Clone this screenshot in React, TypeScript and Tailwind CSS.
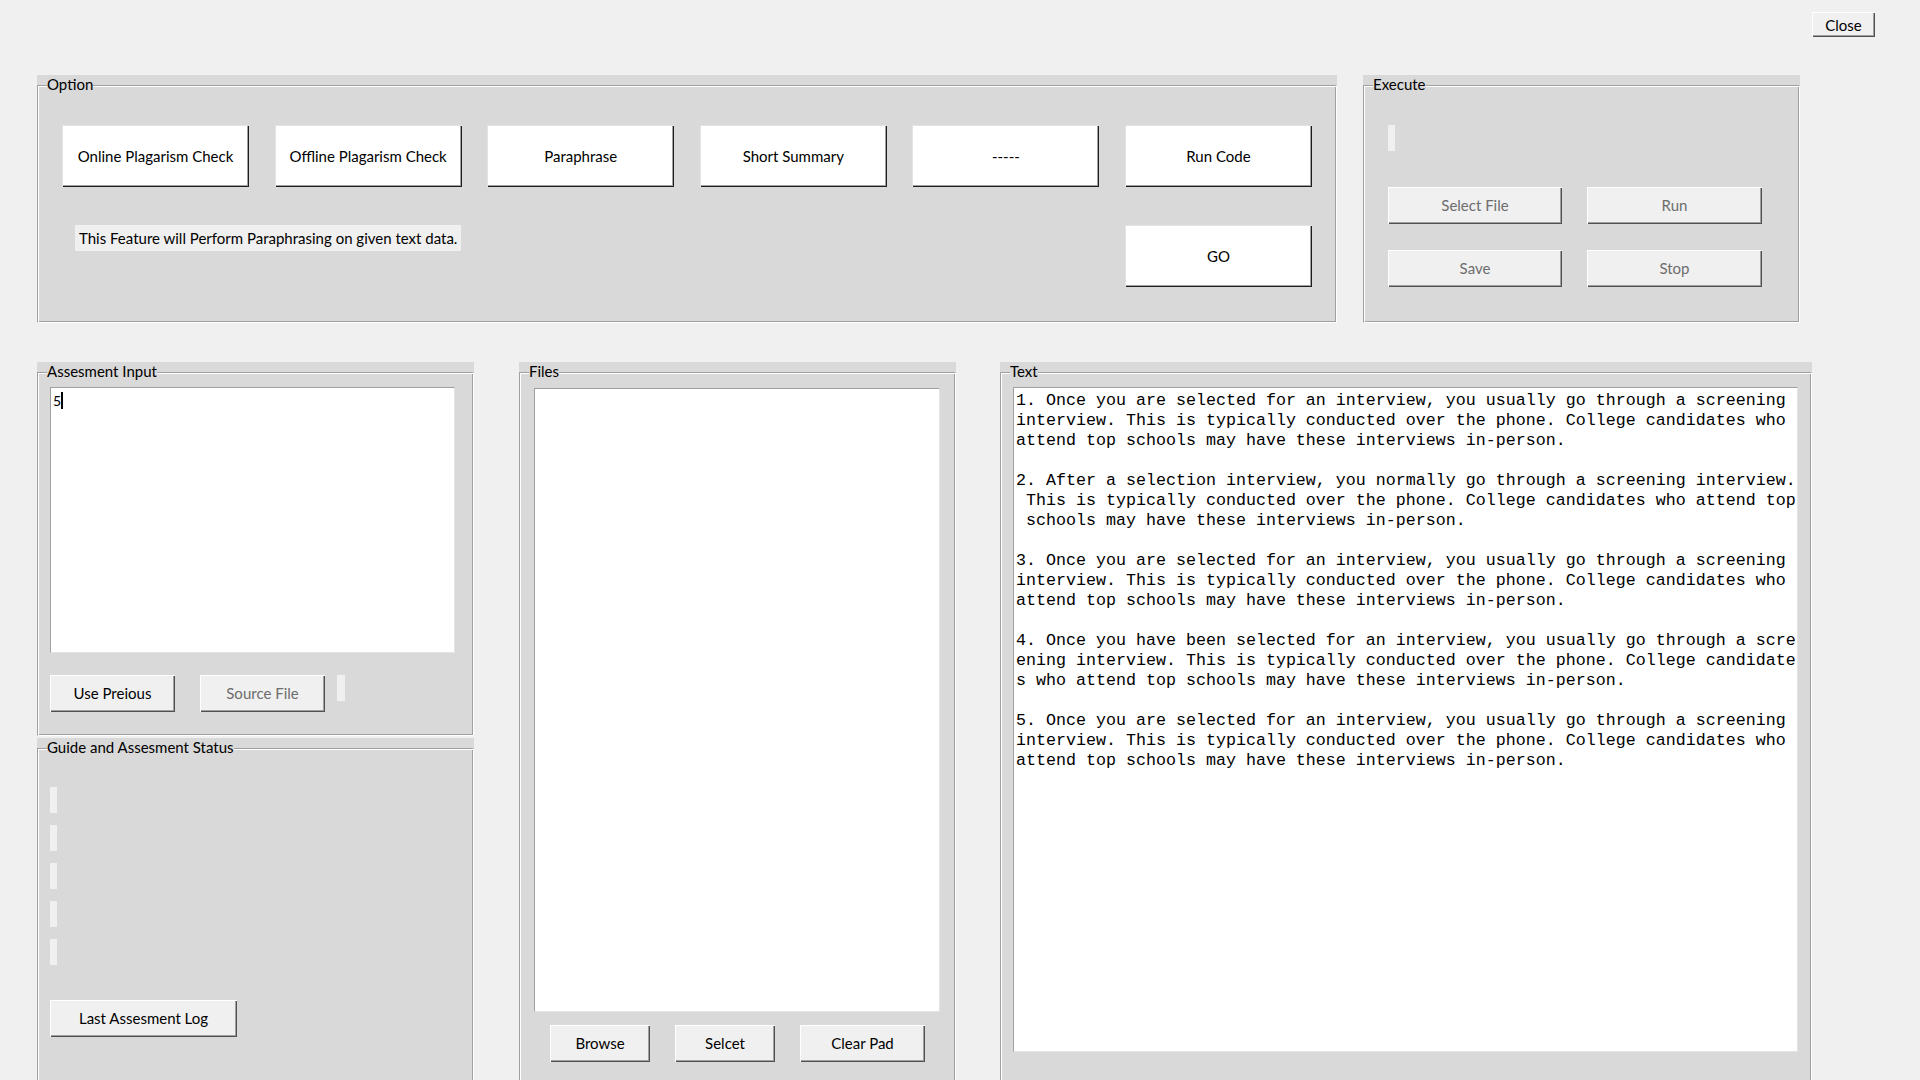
import React from "react";

const GROOVE =
  "border border-t-[#a0a0a0] border-l-[#a0a0a0] border-r-white border-b-white shadow-[inset_1px_1px_0_#ffffff,inset_-1px_-1px_0_#a0a0a0]";

const WHITE_BTN =
  "bg-white shadow-[inset_1px_1px_0_#e3e3e3,inset_-1px_-1px_0_#1e1e1e,inset_-2px_-2px_0_#a0a0a0] flex items-center justify-center text-black";

const GRAY_BTN =
  "bg-[#f0f0f0] shadow-[inset_1px_1px_0_#ffffff,inset_-1px_-1px_0_#505050,inset_-2px_-2px_0_#a0a0a0] flex items-center justify-center";

const SUNKEN =
  "bg-white border border-t-[#a0a0a0] border-l-[#a0a0a0] border-r-[#e3e3e3] border-b-[#e3e3e3]";

function Frame({
  label,
  className,
  innerClass,
  children,
}: {
  label: string;
  className?: string;
  innerClass?: string;
  children?: React.ReactNode;
}) {
  return (
    <div className={`relative bg-[#d9d9d9] pt-[10px] ${className ?? ""}`}>
      <span className="absolute left-[10px] top-0 bg-[#d9d9d9] leading-[19px] text-black">
        {label}
      </span>
      <div className={`h-full ${GROOVE} ${innerClass ?? ""}`}>{children}</div>
    </div>
  );
}

const para1 = [
  "1. Once you are selected for an interview, you usually go through a screening",
  "interview. This is typically conducted over the phone. College candidates who",
  "attend top schools may have these interviews in-person.",
  "",
  "2. After a selection interview, you normally go through a screening interview.",
  " This is typically conducted over the phone. College candidates who attend top",
  " schools may have these interviews in-person.",
  "",
  "3. Once you are selected for an interview, you usually go through a screening",
  "interview. This is typically conducted over the phone. College candidates who",
  "attend top schools may have these interviews in-person.",
  "",
  "4. Once you have been selected for an interview, you usually go through a scre",
  "ening interview. This is typically conducted over the phone. College candidate",
  "s who attend top schools may have these interviews in-person.",
  "",
  "5. Once you are selected for an interview, you usually go through a screening",
  "interview. This is typically conducted over the phone. College candidates who",
  "attend top schools may have these interviews in-person.",
];

export default function App() {
  const optionButtons = [
    "Online Plagarism Check",
    "Offline Plagarism Check",
    "Paraphrase",
    "Short Summary",
    "-----",
    "Run Code",
  ];
  return (
    <div className="w-[1920px] h-[1080px] overflow-hidden bg-[#f0f0f0] font-['Lato',sans-serif] text-[15px] text-black">
      {/* Close */}
      <div className="flex justify-end pt-[12px] pr-[45px]">
        <button type="button" className={`w-[63px] h-[25px] pt-[1px] ${GRAY_BTN} text-black`}>
          Close
        </button>
      </div>

      {/* Top row */}
      <div className="flex gap-[26px] pl-[37px] mt-[38px]">
        <Frame label="Option" className="w-[1300px] h-[248px]" innerClass="pt-[39px] pl-[24px] pr-[24px]">
          <div className="flex gap-[25.6px]">
            {optionButtons.map((b) => (
              <button key={b} type="button" className={`w-[187px] h-[62px] ${WHITE_BTN}`}>
                {b}
              </button>
            ))}
          </div>
          <div className="flex justify-between items-start mt-[38px]">
            <div className="ml-[13px] h-[26px] px-[4px] bg-[#f0f0f0] leading-[26px]">
              This Feature will Perform Paraphrasing on given text data.
            </div>
            <button type="button" className={`w-[187px] h-[62px] ${WHITE_BTN}`}>
              GO
            </button>
          </div>
        </Frame>

        <Frame label="Execute" className="w-[437px] h-[248px]" innerClass="pt-[39px] pl-[24px]">
          <div className="w-[7px] h-[26px] bg-[#f0f0f0]" />
          <div className="grid grid-cols-[174px_175px] gap-x-[25px] gap-y-[26px] mt-[36px]">
            {["Select File", "Run", "Save", "Stop"].map((b) => (
              <button key={b} type="button" className={`h-[37px] ${GRAY_BTN} text-[#6d6d6d]`}>
                {b}
              </button>
            ))}
          </div>
        </Frame>
      </div>

      {/* Bottom row */}
      <div className="flex items-start pl-[37px] mt-[39px]">
        <div className="flex flex-col gap-[2px] w-[437px]">
          <Frame label="Assesment Input" className="h-[374px]" innerClass="pt-[14px] pl-[12px]">
            <div className={`w-[405px] h-[266px] ${SUNKEN} pl-[2px] pt-[4px]`}>
              <div className="flex items-start h-[18px] leading-[18px] text-[14px]">
                <span>5</span>
                <span className="inline-block w-[2px] h-[17px] bg-black" />
              </div>
            </div>
            <div className="flex items-start mt-[22px]">
              <button type="button" className={`w-[125px] h-[37px] ${GRAY_BTN} text-black`}>
                Use Preious
              </button>
              <button type="button" className={`ml-[25px] w-[125px] h-[37px] ${GRAY_BTN} text-[#6d6d6d]`}>
                Source File
              </button>
              <div className="ml-[12px] w-[8px] h-[26px] bg-[#f0f0f0]" />
            </div>
          </Frame>

          <Frame label="Guide and Assesment Status" className="h-[400px]" innerClass="pt-[38px] pl-[12px]">
            <div className="flex flex-col gap-[12px]">
              {[0, 1, 2, 3, 4].map((i) => (
                <div key={i} className="w-[7px] h-[26px] bg-[#f0f0f0]" />
              ))}
            </div>
            <button type="button" className={`mt-[35px] w-[187px] h-[37px] ${GRAY_BTN} text-black`}>
              Last Assesment Log
            </button>
          </Frame>
        </div>

        <Frame label="Files" className="ml-[45px] w-[437px] h-[760px]" innerClass="pt-[15px] pl-[14px]">
          <div className={`w-[406px] h-[624px] ${SUNKEN}`} />
          <div className="flex mt-[13px] ml-[16px]">
            <button type="button" className={`w-[100px] h-[37px] ${GRAY_BTN} text-black`}>
              Browse
            </button>
            <button type="button" className={`ml-[25px] w-[100px] h-[37px] ${GRAY_BTN} text-black`}>
              Selcet
            </button>
            <button type="button" className={`ml-[25px] w-[125px] h-[37px] ${GRAY_BTN} text-black`}>
              Clear Pad
            </button>
          </div>
        </Frame>

        <Frame label="Text" className="ml-[44px] w-[812px] h-[760px]" innerClass="pt-[14px] pl-[12px]">
          <div
            className={`w-[785px] h-[665px] ${SUNKEN} pl-[2px] pt-[3px] font-['Liberation_Mono',monospace] text-[16.67px] leading-[20px] text-black whitespace-pre overflow-hidden`}
          >
            {para1.map((l, i) => (
              <div key={i} className="h-[20px]">
                {l}
              </div>
            ))}
          </div>
        </Frame>
      </div>
    </div>
  );
}
